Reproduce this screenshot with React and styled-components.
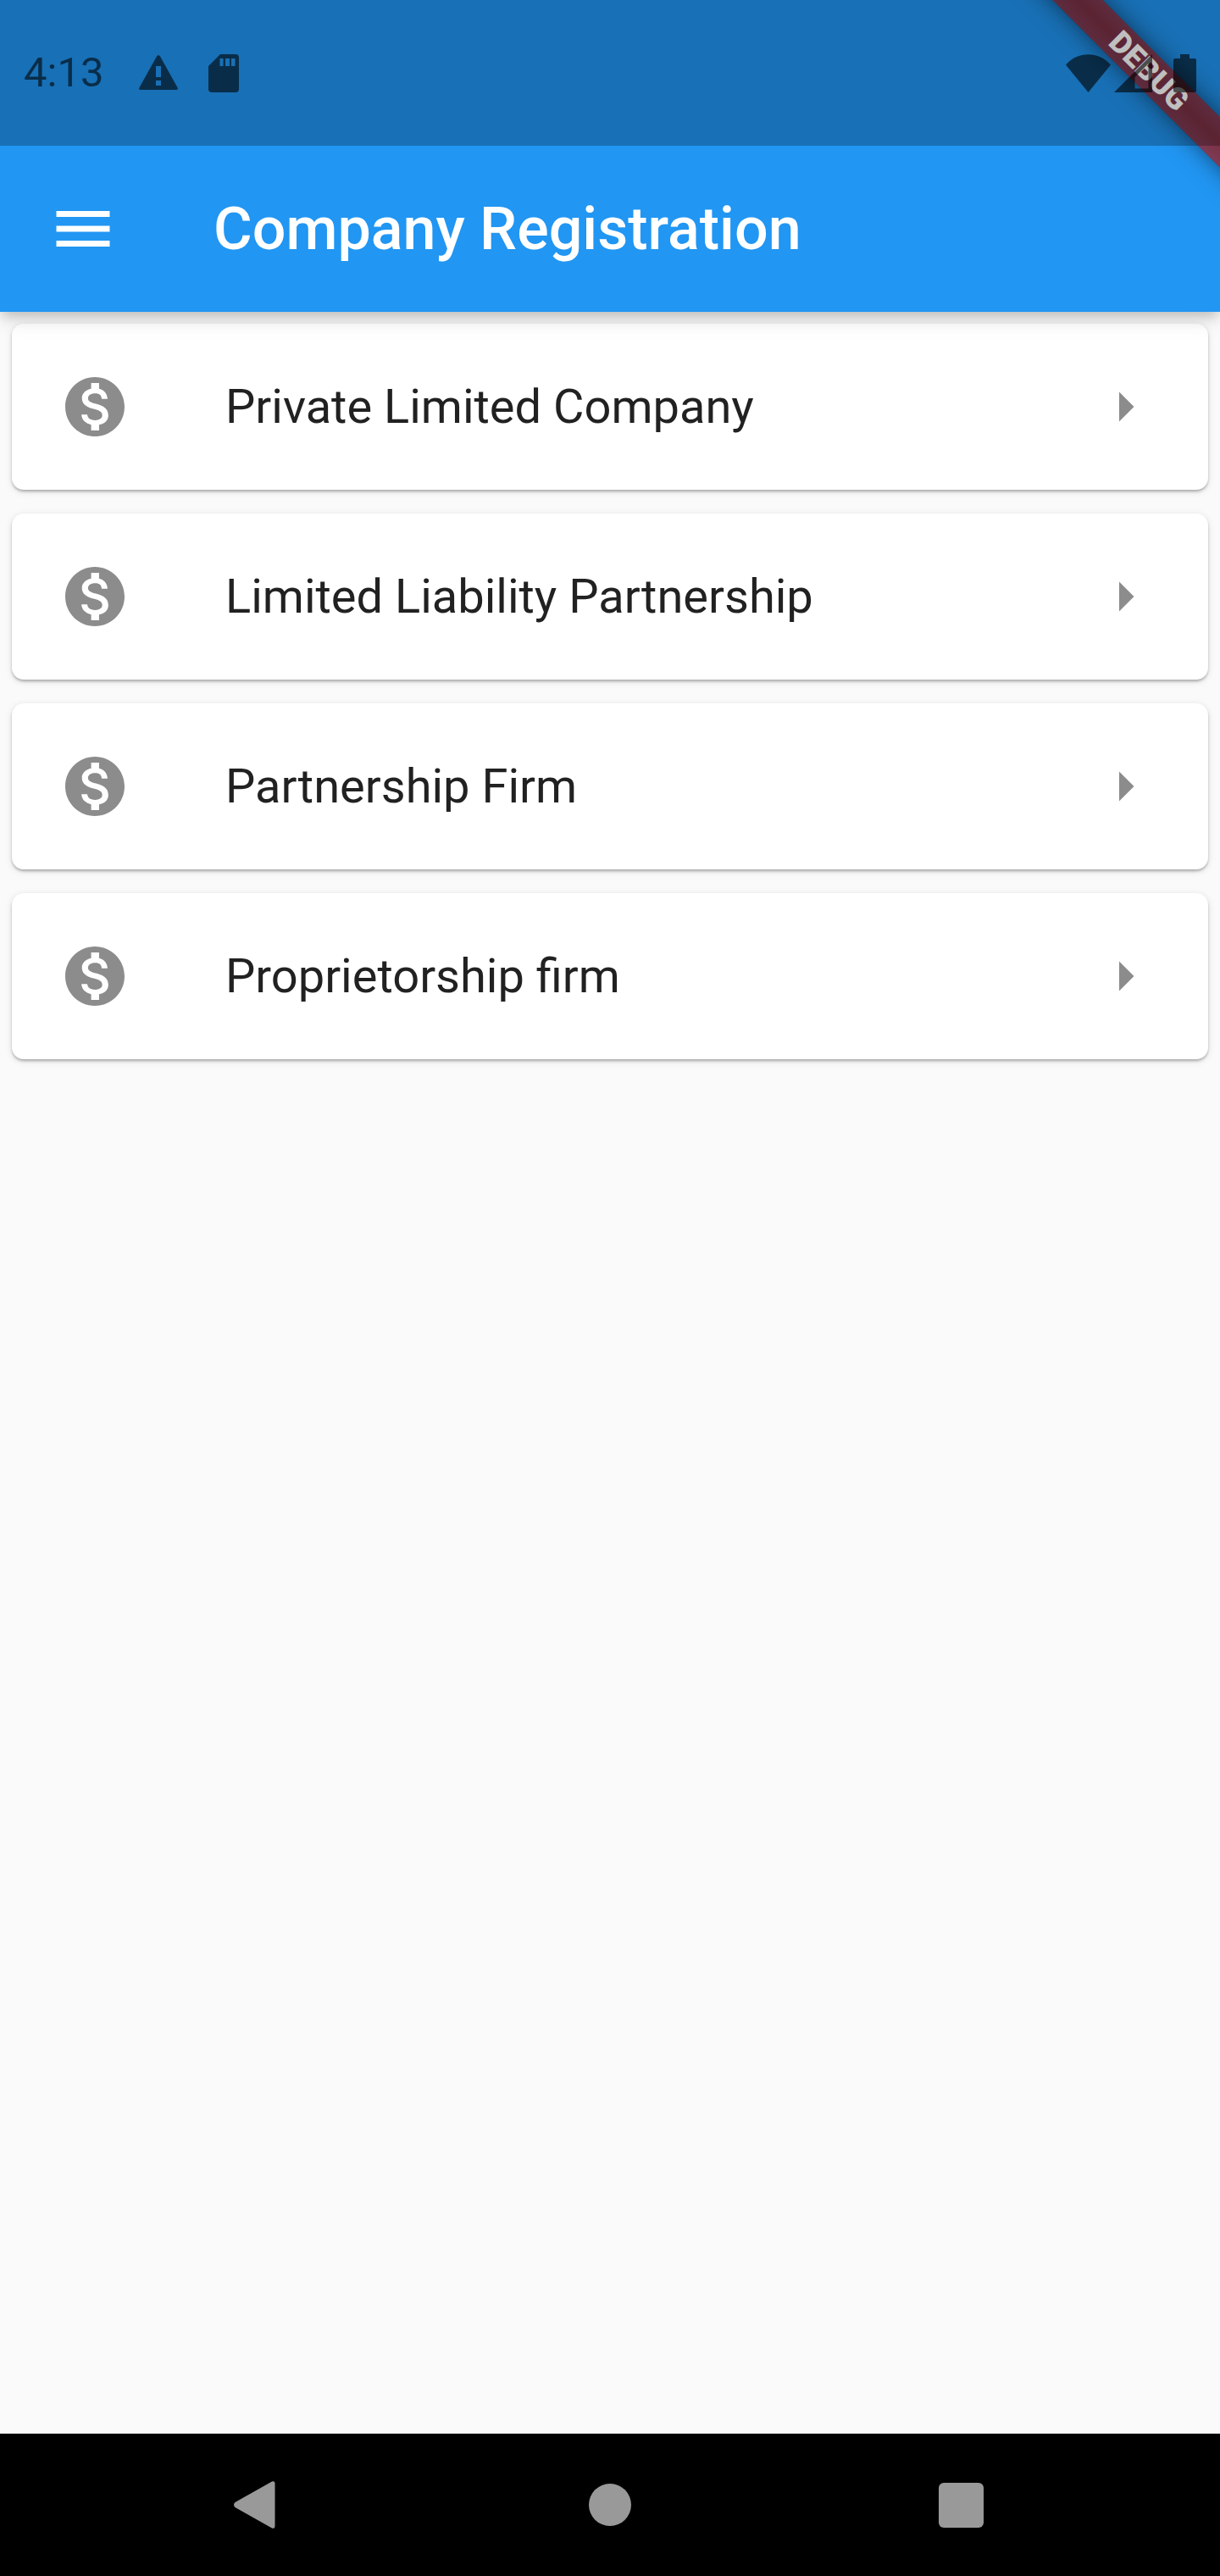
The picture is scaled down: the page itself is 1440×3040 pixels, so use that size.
import React from "react";
import styled, { createGlobalStyle } from "styled-components";

const GlobalStyle = createGlobalStyle`
  *, *::before, *::after { box-sizing: border-box; }
  body {
    margin: 0;
    background: #fafafa;
    font-family: Roboto, "Open Sans", sans-serif;
  }
`;

const Screen = styled.div`
  position: relative;
  display: flex;
  flex-direction: column;
  min-height: 100vh;
  overflow: hidden;
  background: #fafafa;
`;

const Header = styled.header`
  position: relative;
  z-index: 1;
  background: #2196f3;
  box-shadow:
    0 7px 14px -3px rgba(0, 0, 0, 0.2),
    0 14px 18px rgba(0, 0, 0, 0.04),
    0 3px 35px rgba(0, 0, 0, 0.07);
`;

const StatusBar = styled.div`
  position: relative;
  z-index: 3;
  display: flex;
  align-items: center;
  justify-content: space-between;
  height: 172px;
  padding: 0 28px;
  background: rgba(0, 0, 0, 0.25);
  color: rgba(0, 0, 0, 0.6);
`;

const StatusGroup = styled.div`
  display: flex;
  align-items: center;
  gap: ${({ $gap }) => $gap}px;
`;

const Clock = styled.time`
  font-size: 49px;
  line-height: 60px;
  margin-right: 6px;
`;

const Toolbar = styled.div`
  display: flex;
  align-items: center;
  height: 196px;
  padding: 0 56px;
  gap: 112px;
  color: #fff;
`;

const IconButton = styled.button`
  display: flex;
  padding: 0;
  border: 0;
  background: none;
  color: inherit;
  cursor: pointer;
`;

const Title = styled.h1`
  margin: 0;
  font-size: 70px;
  font-weight: 500;
  line-height: 84px;
  white-space: nowrap;
`;

const Ribbon = styled.div`
  position: absolute;
  top: 0;
  right: 0;
  z-index: 2;
  display: flex;
  align-items: center;
  justify-content: center;
  width: 168px;
  height: 168px;
  pointer-events: none;
`;

const RibbonStrip = styled.div`
  flex: none;
  width: 400px;
  transform: rotate(45deg);
  background:
    linear-gradient(rgba(183, 28, 28, 0.63), rgba(183, 28, 28, 0.63)),
    linear-gradient(rgba(0, 0, 0, 0.25), rgba(0, 0, 0, 0.45), rgba(0, 0, 0, 0.25));
  box-shadow: 0 0 28px rgba(0, 0, 0, 0.5);
  color: #fff;
  font-size: 36px;
  font-weight: 900;
  line-height: 42px;
  text-align: center;
`;

const List = styled.ul`
  flex: 1;
  display: flex;
  flex-direction: column;
  gap: 28px;
  margin: 0;
  padding: 14px;
  list-style: none;
`;

const Card = styled.button`
  display: flex;
  align-items: center;
  width: 100%;
  min-height: 196px;
  padding: 0 56px;
  gap: 112px;
  border: 0;
  border-radius: 14px;
  background: #fff;
  box-shadow:
    0 3px 4px -2px rgba(0, 0, 0, 0.2),
    0 2px 3px rgba(0, 0, 0, 0.14),
    0 2px 8px rgba(0, 0, 0, 0.12);
  color: rgba(0, 0, 0, 0.45);
  font-family: inherit;
  text-align: left;
  cursor: pointer;
`;

const CardLabel = styled.span`
  flex: 1;
  color: rgba(0, 0, 0, 0.87);
  font-size: 56px;
  line-height: 66px;
`;

const NavBar = styled.nav`
  display: flex;
  height: 168px;
  padding: 0 98px;
  background: #000;
  color: #999;
`;

const NavButton = styled(IconButton)`
  flex: 1;
  align-items: center;
  justify-content: center;
`;

const Glyph = styled.svg`
  display: block;
  flex: none;
  fill: currentColor;
`;

const Icon = ({ path, size = 84 }) => (
  <Glyph width={size} height={size} viewBox="0 0 24 24" aria-hidden="true">
    <path d={path} />
  </Glyph>
);

const MENU = "M3 18h18v-2H3v2zm0-5h18v-2H3v2zm0-7v2h18V6H3z";
const MONEY =
  "M12 2C6.48 2 2 6.48 2 12s4.48 10 10 10 10-4.48 10-10S17.52 2 12 2zm1.41 16.09V20h-2.67v-1.93c-1.71-.36-3.16-1.46-3.27-3.4h1.96c.1 1.05.82 1.87 2.65 1.87 1.96 0 2.4-.98 2.4-1.59 0-.83-.44-1.61-2.67-2.14-2.48-.6-4.18-1.62-4.18-3.67 0-1.72 1.39-2.84 3.11-3.21V4h2.67v1.95c1.86.45 2.79 1.86 2.85 3.39H14.3c-.05-1.11-.64-1.87-2.22-1.87-1.5 0-2.4.68-2.4 1.64 0 .84.65 1.39 2.67 1.91s4.18 1.39 4.18 3.91c-.01 1.83-1.38 2.83-3.12 3.16z";
const ARROW = "M10 17l5-5-5-5v10z";

const COMPANY_TYPES = [
  "Private Limited Company",
  "Limited Liability Partnership",
  "Partnership Firm",
  "Proprietorship firm",
];

export default function App() {
  return (
    <Screen>
      <GlobalStyle />
      <Header>
        <StatusBar>
          <StatusGroup $gap={36}>
            <Clock>4:13</Clock>
            <Glyph width="46" height="44" viewBox="0 0 46 44" aria-hidden="true">
              <path
                fillRule="evenodd"
                d="M21 2.5Q23 -.5 25 2.5L45.600 39.500Q46.500 42 44 42H2Q-.5 42 .4 39.500ZM20 14v13h6V14ZM20 31v6h6v-6Z"
              />
            </Glyph>
            <Glyph width="36" height="45" viewBox="0 0 36 45" aria-hidden="true">
              <path
                fillRule="evenodd"
                d="M14 0H32Q36 0 36 4V41Q36 45 32 45H4Q0 45 0 41V14ZM13.500 5v9h4V5ZM20 5v9h5V5ZM27 5v9h4.500V5Z"
              />
            </Glyph>
          </StatusGroup>
          <StatusGroup $gap={4}>
            <Glyph width="53" height="45" viewBox="0 0 53 45" aria-hidden="true">
              <path d="M0 12.500C14-4 39-4 53 12.500L26.500 45Z" />
            </Glyph>
            <Glyph width="45" height="45" viewBox="0 0 45 45" aria-hidden="true">
              <path fillRule="evenodd" d="M0 45L45 0V45ZM24.500 27V40.500H40.500V11Z" />
            </Glyph>
            <Glyph width="48" height="45" viewBox="0 0 48 45" aria-hidden="true">
              <path d="M29 0H40V5H46Q48 5 48 7V43Q48 45 46 45H23Q21 45 21 43V7Q21 5 23 5H29Z" />
            </Glyph>
          </StatusGroup>
        </StatusBar>
        <Toolbar>
          <IconButton type="button" aria-label="Open navigation menu">
            <Icon path={MENU} />
          </IconButton>
          <Title>Company Registration</Title>
        </Toolbar>
        <Ribbon>
          <RibbonStrip>DEBUG</RibbonStrip>
        </Ribbon>
      </Header>
      <List>
        {COMPANY_TYPES.map((name) => (
          <li key={name}>
            <Card type="button">
              <Icon path={MONEY} />
              <CardLabel>{name}</CardLabel>
              <Icon path={ARROW} />
            </Card>
          </li>
        ))}
      </List>
      <NavBar aria-label="System navigation">
        <NavButton type="button" aria-label="Back">
          <Glyph width="60" height="56" viewBox="0 0 60 56">
            <path d="M46 .5Q49.500 -.5 49.500 3V53Q49.500 56.500 46 55.500L2.500 31Q-.5 28 2.500 25Z" />
          </Glyph>
        </NavButton>
        <NavButton type="button" aria-label="Home">
          <Glyph width="50" height="50" viewBox="0 0 50 50">
            <circle cx="25" cy="25" r="25" />
          </Glyph>
        </NavButton>
        <NavButton type="button" aria-label="Recent apps">
          <Glyph width="53" height="53" viewBox="0 0 53 53">
            <rect width="53" height="53" rx="6" />
          </Glyph>
        </NavButton>
      </NavBar>
    </Screen>
  );
}
